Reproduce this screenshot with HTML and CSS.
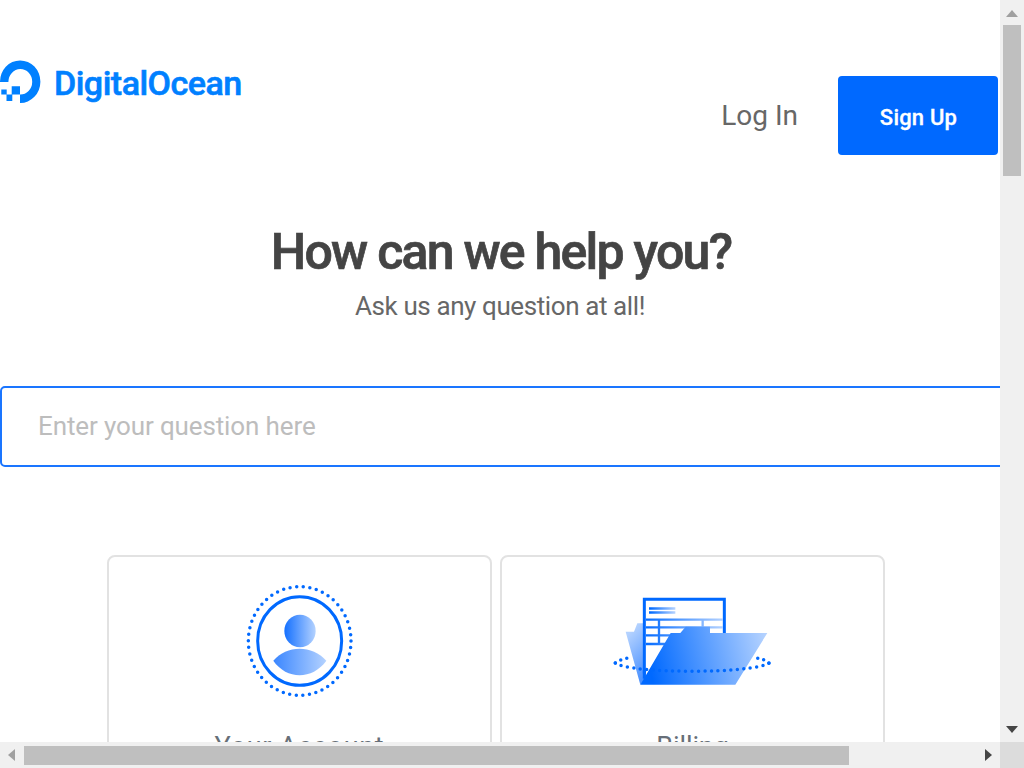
FILE: index.html
```html
<!DOCTYPE html>
<html lang="en">
<head>
<meta charset="utf-8">
<title>DigitalOcean Support</title>
<link rel="stylesheet" href="styles.css">
</head>
<body>
<div class="window">
  <main class="page">
    <header class="header">
      <a class="brand">
        <svg class="brand-mark" viewBox="0 0 41 44" preserveAspectRatio="none">
          <path d="M0 23A20.2 21.3 0 1 1 20 44V35.5A11.9 12.7 0 1 0 8.4 23Z"/>
          <path d="M11.7 27.3H20V35.5H11.7ZM6.5 35.5H12.3V42H6.5ZM1.3 30.5H6.7V35.5H1.3Z"/>
        </svg>
        <span class="brand-name"><span class="fit">DigitalOcean</span></span>
      </a>
      <nav class="nav">
        <a class="login"><span class="fit">Log In</span></a>
        <a class="signup"><span class="fit">Sign Up</span></a>
      </nav>
    </header>
    <section class="hero">
      <h1 class="title"><span class="fit">How can we help you?</span></h1>
      <p class="subtitle"><span class="fit">Ask us any question at all!</span></p>
    </section>
    <div class="search"><span class="fit">Enter your question here</span></div>
    <section class="cards">
      <article class="card">
        <svg class="card-icon" viewBox="0 0 390 390">
          <defs>
            <linearGradient id="person"><stop offset="0" stop-color="#1470ff"/><stop offset="1" stop-color="#b4d2ff"/></linearGradient>
            <linearGradient id="body"><stop offset="0" stop-color="#3a86ff"/><stop offset="1" stop-color="#b4d2ff"/></linearGradient>
          </defs>
          <g fill="none" stroke="#0069ff">
            <ellipse cx="194" cy="198" rx="154" ry="163" stroke-width="10.5" stroke-linecap="round" stroke-dasharray="0 20" pathLength="1000"/>
            <ellipse cx="194" cy="198" rx="126" ry="133" stroke-width="9"/>
          </g>
          <ellipse cx="195" cy="168" rx="47" ry="49" fill="url(#person)"/>
          <path d="M115 257C155 209 232 209 274 257C232 315 155 315 115 257Z" fill="url(#body)"/>
        </svg>
        <h2 class="card-title"><span class="fit">Your Account</span></h2>
      </article>
      <article class="card">
        <svg class="card-icon card-icon-wide" viewBox="0 0 540 390">
          <defs>
            <linearGradient id="front" gradientUnits="userSpaceOnUse" x1="150" y1="250" x2="500" y2="170"><stop offset="0" stop-color="#0069ff"/><stop offset="1" stop-color="#b4d2ff"/></linearGradient>
            <linearGradient id="back" gradientUnits="userSpaceOnUse" x1="80" y1="150" x2="170" y2="235"><stop offset="0" stop-color="#b4d2ff"/><stop offset="1" stop-color="#4a91ff"/></linearGradient>
            <linearGradient id="rule" gradientUnits="userSpaceOnUse" x1="130" y1="0" x2="370" y2="0"><stop offset="0" stop-color="#0069ff"/><stop offset="1" stop-color="#b4d2ff"/></linearGradient>
            <linearGradient id="label" gradientUnits="userSpaceOnUse" x1="150" y1="0" x2="225" y2="0"><stop offset="0" stop-color="#0069ff"/><stop offset="1" stop-color="#b4d2ff"/></linearGradient>
          </defs>
          <g transform="translate(0 31)">
            <path d="M77 139H102L112 114H175V245L121 298Z" fill="url(#back)"/>
            <path d="M133 42H373V260H133Z" fill="#fff" stroke="#0069ff" stroke-width="9"/>
            <path d="M138 253L205 145V260L138 285Z" fill="#fff"/>
            <path d="M133 255V280" stroke="#0069ff" stroke-width="9"/>
            <path d="M138 103H369M138 126H369M138 150H369M138 176H369M177 103V176M308 103V126" fill="none" stroke="url(#rule)" stroke-width="7"/>
            <path d="M150 69H223V70H150ZM150 81H223V82H150Z" stroke="url(#label)" stroke-width="6"/>
            <path d="M121 298L212 143H241L257 124H330V143H502L406 298Z" fill="url(#front)"/>
            <g fill="none" stroke="#0069ff" stroke-width="10.5" stroke-linecap="round">
              <path d="M46 233C88 266 463 266 507 233" stroke-dasharray="0 19.4"/>
              <path d="M46 233Q55 223 89 217M507 233Q498 223 466 217" stroke-dasharray="0 19"/>
            </g>
          </g>
        </svg>
        <h2 class="card-title card-title-billing"><span class="fit">Billing</span></h2>
      </article>
    </section>
  </main>
  <div class="bar bar-v">
    <svg class="arrow" viewBox="0 0 24 24"><path d="M6 17L12 10L18 17Z" fill="#a0a0a0"/></svg>
    <div class="thumb thumb-v"></div>
    <svg class="arrow arrow-end" viewBox="0 0 24 24"><path d="M6 8L12 15L18 8Z" fill="#454545"/></svg>
  </div>
  <div class="bar bar-h">
    <svg class="arrow" viewBox="0 0 24 24"><path d="M15 6L8 12L15 18Z" fill="#a0a0a0"/></svg>
    <div class="thumb thumb-h"></div>
    <svg class="arrow arrow-end" viewBox="0 0 24 24"><path d="M9 6L16 12L9 18Z" fill="#454545"/></svg>
  </div>
  <div class="corner"></div>
</div>
</body>
</html>
```
FILE: styles.css
```css
* { box-sizing: border-box; }
body { margin: 0; background: #fff; font-family: Roboto, "Liberation Sans", sans-serif; }
.window { width: 1024px; height: 768px; display: grid; grid-template-columns: 1000px 24px; grid-template-rows: 742px 26px; overflow: hidden; }
.page { overflow: hidden; min-width: 0; }
.fit { display: inline-block; white-space: nowrap; }
.header { height: 156px; display: flex; justify-content: space-between; }
.brand { display: flex; padding-top: 59px; color: #0080ff; }
.brand-mark { width: 41px; height: 44px; fill: #0080ff; }
.brand-name { margin-left: 13px; font: 500 34px/48px Roboto, sans-serif; letter-spacing: -.5px; -webkit-text-stroke: .6px #0080ff; }
.nav { display: flex; padding: 76px 2px 0 0; }
.login { margin-right: 40px; font-size: 28px; line-height: 80px; color: #676767; }
.signup { width: 160px; height: 79px; border-radius: 4px; background: #0069ff; color: #fff; text-align: center; font-weight: 500; font-size: 22px; line-height: 83px; letter-spacing: .2px; padding-left: 1px; -webkit-text-stroke: .3px #fff; }
.hero { text-align: center; padding-top: 64px; color: #444; }
.title { margin: 0; font-size: 50px; font-weight: 500; line-height: 64px; padding-left: 2px; letter-spacing: -1.75px; -webkit-text-stroke: .7px #444; }
.subtitle { margin: 0; font-size: 26px; line-height: 44px; color: #676767; letter-spacing: -.4px; }
.search { margin-top: 58px; width: 1040px; height: 81px; border: 2px solid #1a75ff; border-radius: 5px; padding-left: 36px; font-size: 26px; line-height: 76px; color: #bdbdbd; letter-spacing: -.12px; }
.cards { display: flex; gap: 8px; margin: 88px 0 0 107px; }
.card { width: 385px; height: 260px; border: 2px solid #e2e2e2; border-radius: 8px; display: flex; flex-direction: column; align-items: center; padding-top: 18px; }
.card-icon { width: 130px; height: 130px; flex: none; }
.card-icon-wide { width: 180px; margin-left: -5px; }
.card-title { margin: 23px 0 0; font-size: 27px; font-weight: 400; line-height: 38px; color: #676f78; letter-spacing: .7px; }
.card-title-billing { letter-spacing: -.1px; }
.bar { background: #f0f0f0; display: flex; }
.bar-v { flex-direction: column; align-items: center; }
.bar-h { align-items: center; }
.arrow { width: 24px; height: 24px; flex: none; }
.arrow-end { margin-left: auto; }
.bar-v .arrow-end { margin: auto 0 0; }
.thumb { background: #bfbfbf; flex: none; }
.thumb-v { width: 18px; height: 151px; margin-top: 1px; }
.thumb-h { width: 825px; height: 19px; }
.corner { background: #dcdcdc; }
```
